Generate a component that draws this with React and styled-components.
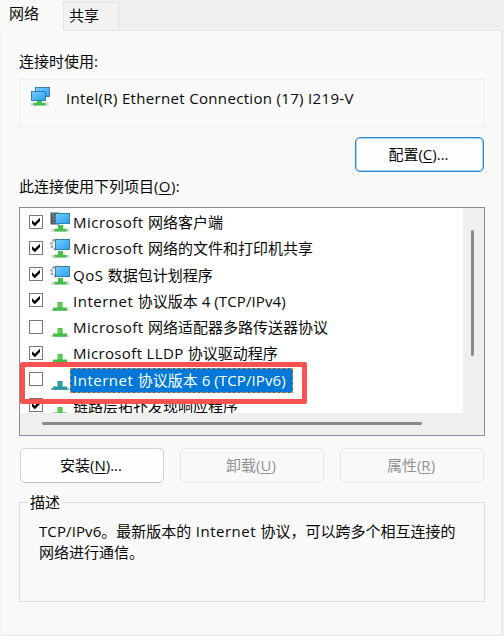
import React from 'react';
import styled, { createGlobalStyle } from 'styled-components';

const GlobalStyle = createGlobalStyle`
  * {
    box-sizing: border-box;
  }

  body {
    margin: 0;
    background: #f9f9f9;
  }
`;

const Dialog = styled.div`
  width: 504px;
  height: 636px;
  display: flex;
  flex-direction: column;
  overflow: hidden;
  background: #efefef;
  color: #080808;
  font-family: 'Open Sans', 'Noto Sans CJK SC', sans-serif;
  font-size: 15px;
  line-height: 20px;
  white-space: nowrap;
`;

// 标签页
const TabBar = styled.div`
  height: 31px;
  flex: none;
  display: flex;
  align-items: flex-end;
`;

const TabFill = styled.div`
  flex: 1;
  height: 1px;
  margin-right: 2px;
  background: #e6e6e6;
`;

const Tab = styled.div`
  width: ${(p) => (p.$active ? 63 : 56)}px;
  height: ${(p) => (p.$active ? 31 : 29)}px;
  padding: ${(p) => (p.$active ? '2px 0 0 9px' : '2px 0 0 5px')};
  border: 1px solid ${(p) => (p.$active ? '#f6f6f6' : '#e6e6e6')};
  border-width: ${(p) => (p.$active ? '1px 0 0 0' : '1px')};
  background: ${(p) => (p.$active ? '#f9f9f9' : '#f2f2f2')};
`;

const Page = styled.div`
  width: 502px;
  height: 605px;
  padding: 20px 16px 0 18px;
  border: solid #e8e8e8;
  border-width: 0 1px 1px 0;
  border-left: 1px solid #f3f3f3;
  background: #f9f9f9;
`;

const Latin = styled.span`
  letter-spacing: ${(p) => p.$gap}px;
`;

const Key = styled.span`
  text-decoration: underline;
  text-decoration-thickness: 1px;
  text-underline-offset: 2px;
`;

const Adapter = styled.div`
  width: 466px;
  height: 48px;
  margin-top: 8px;
  padding: 5px 0 0 10px;
  display: flex;
  gap: 16px;
  border: 1px solid #eeeeee;
`;

const AdapterName = styled.div`
  padding-top: 3px;
`;

const ButtonRow = styled.div`
  width: 466px;
  display: flex;
  justify-content: ${(p) => (p.$right ? 'flex-end' : 'space-between')};
  margin-top: ${(p) => (p.$right ? 10 : 12)}px;
  padding: 0 1px;
`;

const Button = styled.button`
  width: ${(p) => p.$width}px;
  height: 35px;
  padding: 0 2px 2px 0;
  border: 1px solid ${(p) => (p.$primary ? '#2786d2' : '#d2d2d2')};
  border-bottom-color: ${(p) => (p.$primary ? '#2786d2' : '#bfbfbf')};
  border-radius: 5px;
  background: #fefefe;
  box-shadow: ${(p) => (p.$primary ? 'inset 0 0 0 1px #a9d2f3' : 'none')};
  color: #080808;
  font: inherit;

  &:disabled {
    border-color: #ebebeb;
    background: #f9f9f9;
    color: #929292;
  }
`;

const ListLabel = styled.div`
  margin-top: 4px;
`;

// 协议列表
const List = styled.div`
  position: relative;
  width: 466px;
  height: 229px;
  margin-top: 11px;
  display: grid;
  grid-template: 205px 1fr / 443px 1fr;
  border: 1px solid #8b8e98;
  background: #efefef;
`;

const Rows = styled.div`
  padding: 2px 0 0 9px;
  overflow: hidden;
  background: #ffffff;
`;

const Row = styled.div`
  height: 26.25px;
  display: flex;
  align-items: center;
`;

const Box = styled.span`
  width: 14px;
  height: 14px;
  margin: 0 7px 3px 0;
  flex: none;
  border: 1px solid #777777;
  background: #ffffff;

  svg {
    display: block;
  }
`;

const Name = styled.span`
  height: 25px;
  margin-bottom: 0.8px;
  padding: 0 6px 0 2px;
  line-height: 22px;
  border: 1px dashed transparent;
  ${(p) =>
    p.$selected &&
    `
    border-color: #d9883e;
    background: #0078d7;
    color: #ffffff;
  `}
`;

const VTrack = styled.div`
  padding: 22px 0 0 8px;
`;

const VThumb = styled.div`
  width: 3px;
  height: 126px;
  border-radius: 2px;
  background: #8b8b8b;
`;

const HTrack = styled.div`
  padding: 9px 0 0 22px;
`;

const HThumb = styled.div`
  width: 380px;
  height: 3px;
  border-radius: 2px;
  background: #8b8b8b;
`;

const RedMark = styled.div`
  position: absolute;
  left: 0;
  top: 154px;
  width: 287px;
  height: 42px;
  border: 5px solid #fa5151;
  border-radius: 2px;
`;

// 描述
const Group = styled.fieldset`
  width: 466px;
  height: 110px;
  margin: 9px 0 0;
  padding: 9px 0 0 19px;
  border: 1px solid #dcdcdc;
`;

const Legend = styled.legend`
  margin-left: -11px;
  padding: 0 2px;
`;

const Description = styled.div`
  line-height: 21px;
`;

function latinGap(part) {
  if (part.includes('Ethernet')) return 0.33;
  if (part.includes('TCP')) return 0.1;
  if (part.includes('LLDP')) return 0.35;
  return 0.5;
}

function Mixed({ text }) {
  return text
    .split(/([\x20-\x7e]+)/)
    .filter(Boolean)
    .map((part, i) =>
      /^[\x20-\x7e]/.test(part) ? (
        <Latin key={i} $gap={latinGap(part)}>
          {part}
        </Latin>
      ) : (
        part
      )
    );
}

function Check() {
  return (
    <svg width="12" height="12" viewBox="0 0 12 12">
      <path d="M2 4.2 4.8 6.8 10 1.8v3.1L4.8 10.2 2 7.5z" fill="#000" />
    </svg>
  );
}

function Screen({ x, y, w, h }) {
  return <rect x={x} y={y} width={w} height={h} fill="url(#blue)" stroke="#397da9" />;
}

function Stand({ x, y, w = 18 }) {
  return (
    <g transform={`translate(${x} ${y})`}>
      <rect y="2.7" width={w} height="3" fill="#d5d5d5" />
      <path d={`M${w / 2 - 2.5}-1h5v3.8h3.5v2.6h-12v-2.6h3.5z`} fill="#45c14b" />
    </g>
  );
}

function AdapterIcon() {
  return (
    <svg width="20" height="22" viewBox="0 0 20 22">
      <Screen x={5.5} y={2.5} w={14} h={9} />
      <Stand x={0.5} y={15} />
      <Screen x={1.5} y={6.5} w={14} h={9} />
    </svg>
  );
}

function ItemIcon({ kind }) {
  if (kind === 'protocol' || kind === 'selected') {
    const on = kind === 'selected';
    return (
      <svg width="20" height="22" viewBox="0 0 20 22">
        <rect x="1" y="18" width="18" height="2" fill={on ? '#83a9d1' : '#d3dbd3'} />
        <path d="M7.5 11h5v5.5H17v3.3H3v-3.3h4.5z" fill={on ? '#239aa0' : '#46bd49'} />
        <path d="M8 12h3v4H8z" fill={on ? '#34a4a0' : '#65ce55'} />
      </svg>
    );
  }
  return (
    <svg width="20" height="22" viewBox="0 0 20 22">
      {kind === 'client' ? (
        <>
          <path d="M.5.5h9v12h-9z" fill="#4c5557" />
          <path d="M2 4h4M2 7h4M2 10h4" stroke="#8d999a" />
          <path d="M2 2h2" stroke="#5dd565" />
        </>
      ) : (
        <circle
          cx="6"
          cy="6.5"
          r="4.6"
          fill="#f5f5f5"
          stroke="#9ba2a6"
          strokeWidth="2.6"
          strokeDasharray="2.3 1.2"
        />
      )}
      <Stand x={1.5} y={14} />
      <Screen x={5.5} y={1.5} w={14} h={10} />
    </svg>
  );
}

const items = [
  { text: 'Microsoft 网络客户端', kind: 'client', checked: true },
  { text: 'Microsoft 网络的文件和打印机共享', kind: 'service', checked: true },
  { text: 'QoS 数据包计划程序', kind: 'service', checked: true },
  { text: 'Internet 协议版本 4 (TCP/IPv4)', kind: 'protocol', checked: true },
  { text: 'Microsoft 网络适配器多路传送器协议', kind: 'protocol' },
  { text: 'Microsoft LLDP 协议驱动程序', kind: 'protocol', checked: true },
  { text: 'Internet 协议版本 6 (TCP/IPv6)', kind: 'selected' },
  { text: '链路层拓扑发现响应程序', kind: 'protocol', checked: true },
];

export default function App() {
  return (
    <Dialog>
      <GlobalStyle />
      <svg width="0" height="0" style={{ position: 'absolute' }}>
        <linearGradient id="blue" x1="0" y1="0" x2="1" y2="1">
          <stop offset="0" stopColor="#76ccff" />
          <stop offset="1" stopColor="#27a3f4" />
        </linearGradient>
      </svg>
      <TabBar>
        <Tab $active>网络</Tab>
        <Tab>共享</Tab>
        <TabFill />
      </TabBar>
      <Page>
        <div>连接时使用:</div>
        <Adapter>
          <AdapterIcon />
          <AdapterName>
            <Mixed text="Intel(R) Ethernet Connection (17) I219-V" />
          </AdapterName>
        </Adapter>
        <ButtonRow $right>
          <Button $width={129} $primary>
            配置(<Key>C</Key>)...
          </Button>
        </ButtonRow>
        <ListLabel>
          此连接使用下列项目
          <Latin $gap={0.4}>
            (<Key>O</Key>):
          </Latin>
        </ListLabel>
        <List>
          <Rows>
            {items.map((item) => (
              <Row key={item.text}>
                <Box>{item.checked && <Check />}</Box>
                <ItemIcon kind={item.kind} />
                <Name $selected={item.kind === 'selected'}>
                  <Mixed text={item.text} />
                </Name>
              </Row>
            ))}
          </Rows>
          <VTrack>
            <VThumb />
          </VTrack>
          <HTrack>
            <HThumb />
          </HTrack>
          <RedMark />
        </List>
        <ButtonRow>
          <Button $width={144}>
            安装(<Key>N</Key>)...
          </Button>
          <Button $width={144} disabled>
            卸载(<Key>U</Key>)
          </Button>
          <Button $width={144} disabled>
            属性(<Key>R</Key>)
          </Button>
        </ButtonRow>
        <Group>
          <Legend>描述</Legend>
          <Description>
            <Mixed text="TCP/IPv6。最新版本的 Internet 协议，可以跨多个相互连接的" />
            <br />
            网络进行通信。
          </Description>
        </Group>
      </Page>
    </Dialog>
  );
}
